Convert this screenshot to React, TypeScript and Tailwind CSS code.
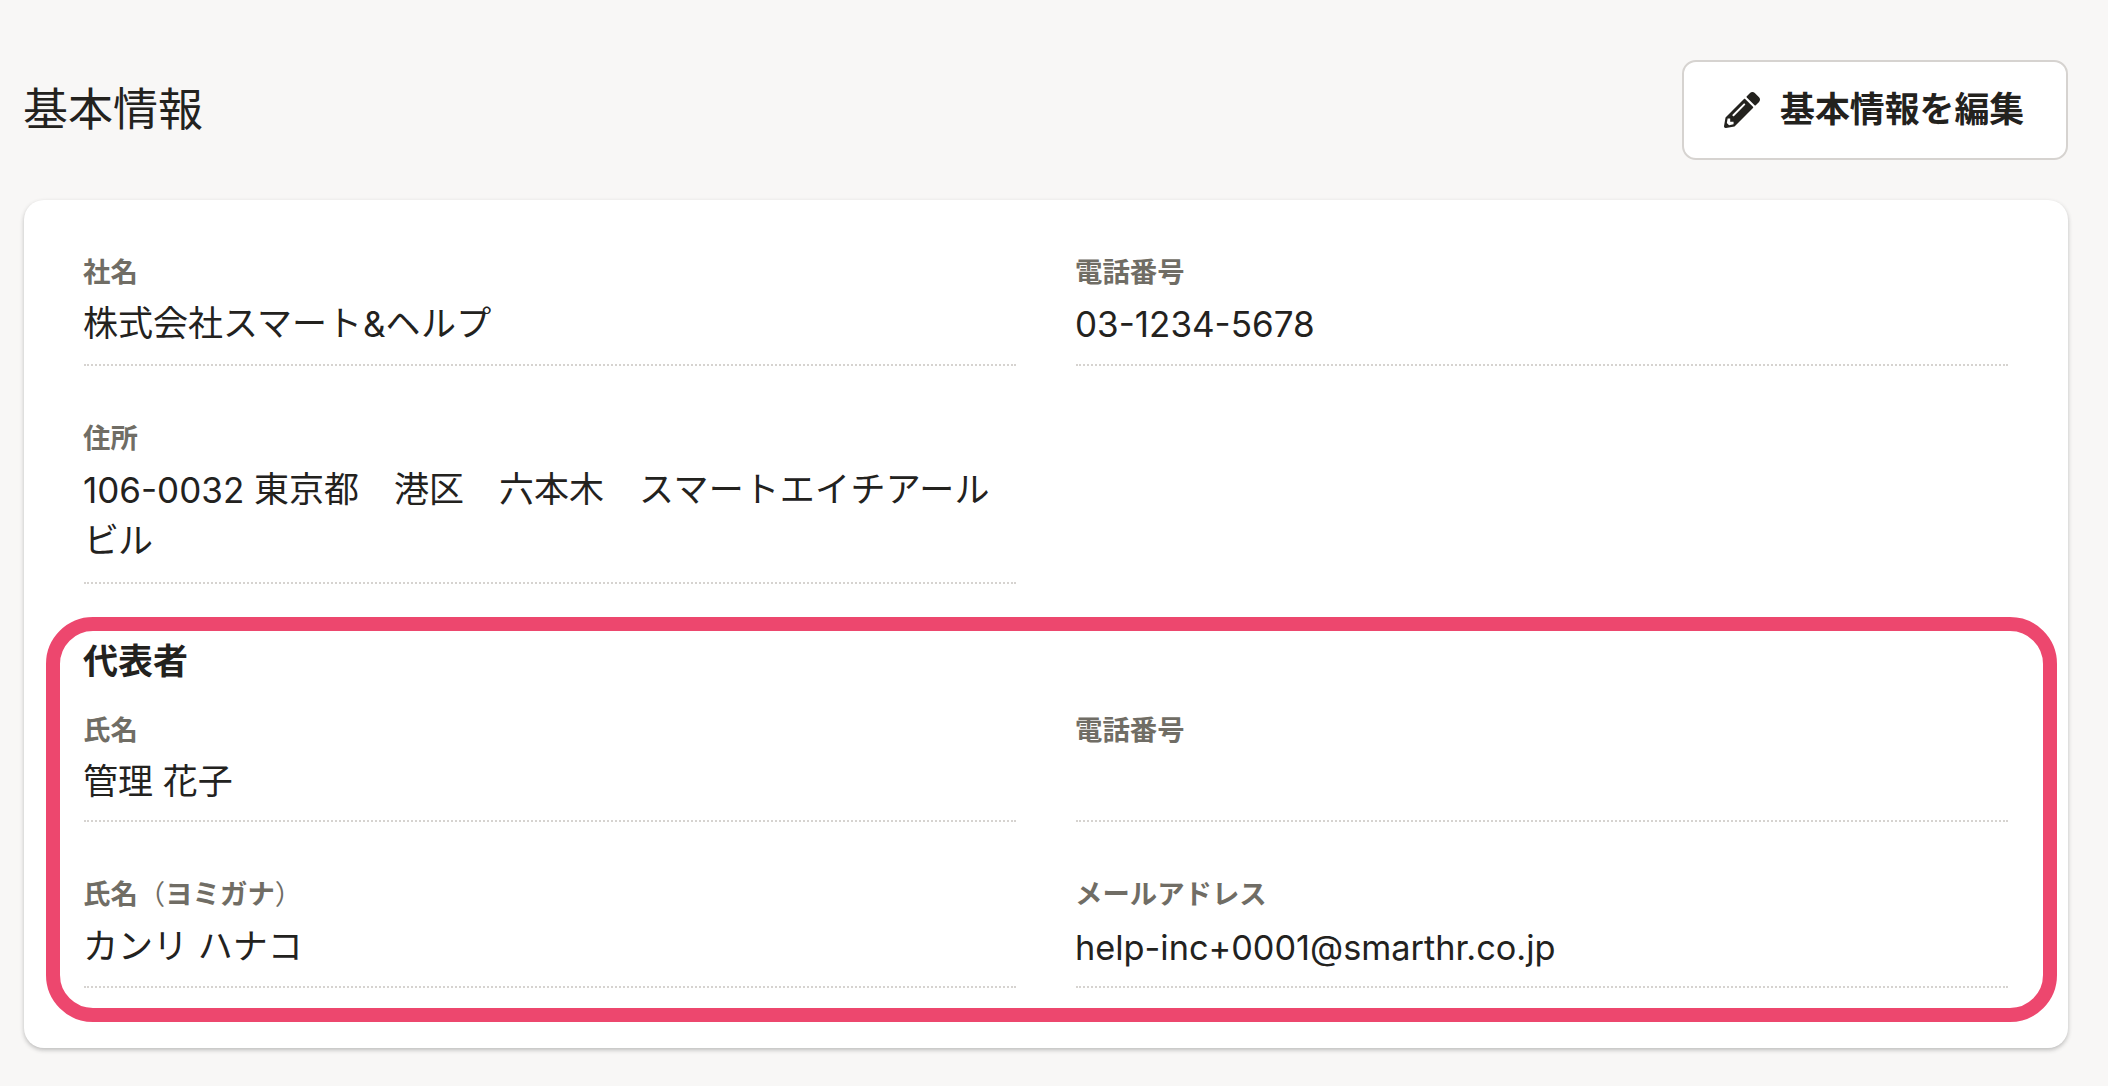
import type { ReactNode } from 'react'
import { FaPencilAlt } from 'react-icons/fa'

type FieldProps = {
  label: ReactNode
  children?: ReactNode
  valueClass?: string
}

function Field({ label, children, valueClass = 'pb-4 leading-[52px]' }: FieldProps) {
  return (
    <div>
      <dt className="h-9 pt-px indent-[-1px] whitespace-nowrap text-[27.4px] leading-9 font-bold text-[#706d65]">
        {label}
      </dt>
      <dd
        className={`mt-[7px] box-content min-h-[52px] border-b-2 border-dotted border-[#d6d3d0] indent-[-1px] text-[35px] ${valueClass}`}
      >
        {children}
      </dd>
    </div>
  )
}

function Latin({ children, className = '' }: { children: ReactNode; className?: string }) {
  return <span className={`align-[-1px] leading-none ${className}`}>{children}</span>
}

export default function App() {
  return (
    <div
      lang="ja"
      className="h-[1086px] w-[2108px] overflow-hidden bg-[#f8f7f6] pt-[60px] pr-10 pl-6 font-['Inter','Noto_Sans_CJK_JP',sans-serif] text-[#23221e]"
    >
      <header className="flex h-[100px] items-center justify-between">
        <h1 className="indent-[-1px] text-[45px] leading-[60px] font-normal">基本情報</h1>
        <button className="flex h-[100px] w-[386px] items-center gap-5 rounded-[14px] border-2 border-[#d6d3d0] bg-white pl-10 text-[34.9px] leading-[52px] font-bold whitespace-nowrap">
          <FaPencilAlt className="size-9 shrink-0" />
          <span className="pb-0.5">基本情報を編集</span>
        </button>
      </header>

      <main className="relative mt-10 h-[848px] rounded-[20px] bg-white px-[60px] pt-[53px] shadow-[0_2px_4px_0_rgba(51,51,51,0.3)]">
        <dl className="grid grid-cols-2 gap-x-[60px] gap-y-[53px]">
          <Field label="社名" valueClass="pt-px pb-[15px] leading-[52px]">
            株式会社スマート<Latin className="pl-px">&amp;</Latin>
            <span className="tracking-[0.4px]">ヘルプ</span>
          </Field>
          <Field label="電話番号" valueClass="pt-px pb-[15px] leading-[52px]">
            <Latin>03-1234-5678</Latin>
          </Field>
          <Field label="住所" valueClass="pt-0.5 pb-4 leading-[51px]">
            <Latin>106-0032 </Latin>東京都　港区　六本木　<span className="tracking-[0.4px]">スマートエイチアール</span>
            <br />
            <span className="tracking-[-1px]">ビル</span>
          </Field>
        </dl>

        <h2 className="mt-[50px] h-[52px] pt-px indent-[-1px] text-[35px] leading-[52px] font-bold">代表者</h2>
        <dl className="mt-[25px] grid grid-cols-2 gap-x-[60px] gap-y-[53px]">
          <Field label="氏名" valueClass="pt-px pb-[13px] leading-[52px]">
            管理 花子
          </Field>
          <Field label="電話番号" valueClass="pt-px pb-[13px] leading-[52px]" />
          <Field
            label={
              <>
                氏名<span className="font-normal">（</span>ヨミガナ<span className="font-normal">）</span>
              </>
            }
            valueClass="pt-0.5 pb-3.5 leading-[52px]"
          >
            カンリ ハナコ
          </Field>
          <Field label="メールアドレス" valueClass="pt-0.5 pb-3.5 leading-[52px]">
            <Latin className="text-[34.3px]">help-inc+0001@smarthr.co.jp</Latin>
          </Field>
        </dl>

        <div className="pointer-events-none absolute top-[416.5px] left-[22px] h-[405px] w-[2011px] rounded-[47px] border-[14px] border-[#ed476e]" />
      </main>
    </div>
  )
}
